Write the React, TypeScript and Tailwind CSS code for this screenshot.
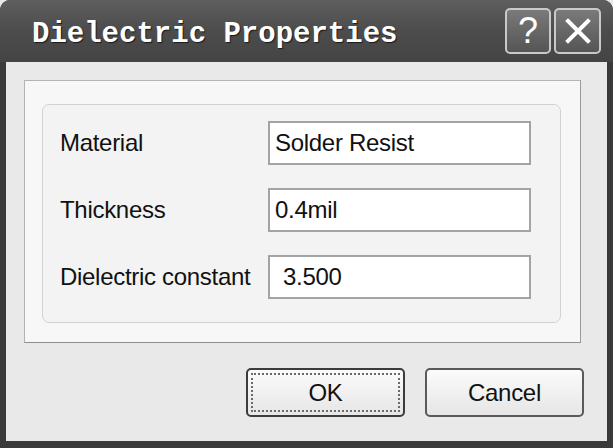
import React from "react";

const fields = [
  { label: "Material", value: "Solder Resist", indent: "pl-[5px]" },
  { label: "Thickness", value: "0.4mil", indent: "pl-[5px]" },
  { label: "Dielectric constant", value: "3.500", indent: "pl-[13px]" },
];

const App: React.FC = () => {
  return (
    <div className="h-[448px] w-[613px] overflow-hidden bg-[#e9e9e9]">
      <div className="flex h-full w-full flex-col overflow-hidden rounded-t-[10px] bg-[#3a3a3a] px-[6px] pb-[7px]">
        {/* ---------- Title bar ---------- */}
        <div className="-mx-[6px] flex h-[62px] shrink-0 items-center justify-between bg-gradient-to-b from-[#5e5e5e] via-[#4c4c4c] to-[#444444] pl-[32px] pr-[12px]">
          <span
            className="pt-[7px] text-[29px] font-bold leading-none text-white [text-shadow:1px_1px_1px_#1a1a1a]"
            style={{ fontFamily: '"Liberation Mono", "DejaVu Sans Mono", monospace' }}
          >
            Dielectric Properties
          </span>
          <div className="flex gap-[3px]">
            <div className="flex h-[46px] w-[46px] items-center justify-center rounded-[5px] border-2 border-[#c9c9c9] bg-gradient-to-b from-[#7a7a7a] to-[#555555]">
              <span
                className="text-[36px] leading-none text-white"
                style={{ fontFamily: '"Liberation Sans", Arial, sans-serif' }}
              >
                ?
              </span>
            </div>
            <div className="flex h-[46px] w-[47px] items-center justify-center rounded-[5px] border-2 border-[#c9c9c9] bg-gradient-to-b from-[#7a7a7a] to-[#555555]">
              <svg width="26" height="26" viewBox="0 0 26 26">
                <path d="M3 3 L23 23 M23 3 L3 23" stroke="white" strokeWidth="4" strokeLinecap="square" />
              </svg>
            </div>
          </div>
        </div>

        {/* ---------- Client area ---------- */}
        <div
          className="flex flex-1 flex-col bg-[#e9e9e9] pl-[18px] pr-[26px] pt-[18px] text-[#111]"
          style={{ fontFamily: '"Liberation Sans", Arial, sans-serif' }}
        >
          <div className="h-[263px] border border-[#b4b4b4] border-b-[#8f8f8f] border-r-[#9a9a9a] bg-[#f7f7f7] pl-[17px] pr-[19px] pt-[23px]">
            <div className="flex h-[219px] flex-col gap-[23px] rounded-[7px] border border-[#d2d2d2] bg-[#f3f3f3] pl-[17px] pr-[29px] pt-[16px]">
              {fields.map((f) => (
                <div key={f.label} className="flex h-[44px] items-center justify-between">
                  <span className="text-[24px] tracking-[-0.3px]">{f.label}</span>
                  <div
                    className={`flex h-[44px] w-[263px] items-center border-2 border-[#a3a3a3] bg-white ${f.indent}`}
                  >
                    <span className="text-[24px] tracking-[-0.3px]">{f.value}</span>
                  </div>
                </div>
              ))}
            </div>
          </div>

          {/* ---------- Buttons ---------- */}
          <div className="mt-[25px] flex justify-end gap-[20px]">
            <button className="flex h-[49px] w-[159px] items-center justify-center rounded-[5px] border-2 border-[#3c3c3c] bg-gradient-to-b from-[#fbfbfb] to-[#e6e6e6] p-[3px]">
              <span className="flex h-full w-full items-center justify-center border-2 border-dotted border-[#6a6a6a] text-[24px] tracking-[-0.3px]">
                OK
              </span>
            </button>
            <button className="-mr-[3px] flex h-[49px] w-[159px] items-center justify-center rounded-[5px] border-2 border-[#5a5a5a] bg-gradient-to-b from-[#fbfbfb] to-[#e6e6e6] text-[24px] tracking-[-0.3px]">
              Cancel
            </button>
          </div>
        </div>
      </div>
    </div>
  );
};

export default App;
